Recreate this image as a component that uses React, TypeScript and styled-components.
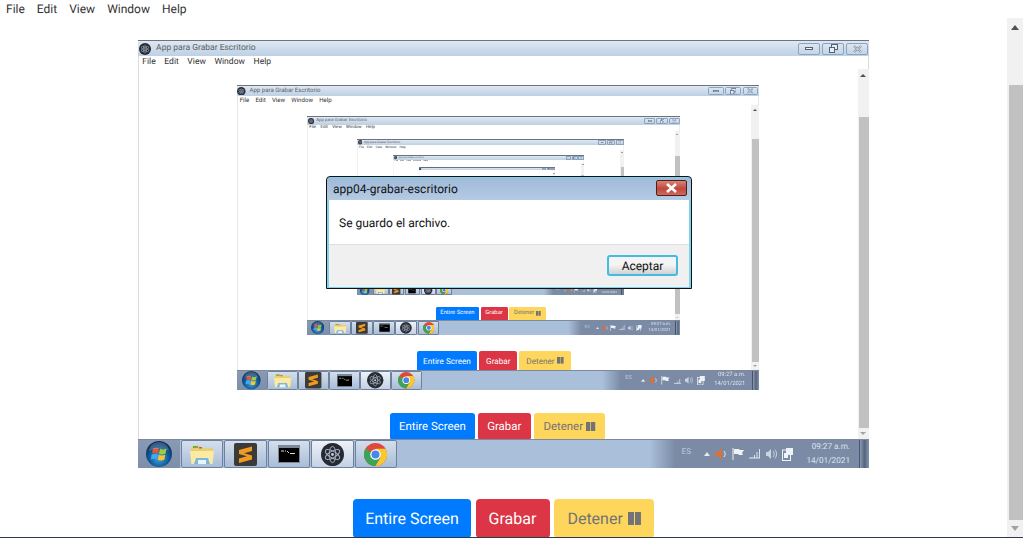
import React from "react";
import styled, { createGlobalStyle } from "styled-components";

const SHOT_RATIO = 731 / 1023;
const UI_FONT = `Roboto, "Open Sans", "Liberation Sans", sans-serif`;

const GlobalStyle = createGlobalStyle`
  html, body { margin: 0; padding: 0; background: #fff; overflow: hidden; }
  * { box-sizing: border-box; }
  body { font-family: ${UI_FONT}; text-rendering: geometricPrecision; }
`;

const Viewport = styled.div`
  position: relative;
  width: 1023px;
  height: 538px;
  font-size: 1px;
  overflow: hidden;
  background: #fff;
  border-bottom: 1px solid #2e3a4a;
`;

const PageBox = styled.div`
  width: 1023em;
  height: 537em;
  overflow: hidden;
`;

const MenuBar = styled.div`
  display: flex;
  height: 18em;
  padding-left: 6em;
  gap: 12em;
  align-items: center;
`;

const MenuItem = styled.span`
  font-size: 12em;
  line-height: 1;
  color: #333;
`;

const PageRow = styled.div`
  display: flex;
  height: 519em;
`;

const Main = styled.div`
  flex: 1;
  display: flex;
  flex-direction: column;
  align-items: center;
  min-width: 0;
`;

const Scrollbar = styled.div`
  width: 16em;
  background: #f1f1f1;
  display: flex;
  flex-direction: column;
  align-items: flex-end;
`;

const ArrowCell = styled.div<{ $down?: boolean }>`
  width: 16em;
  height: ${(p) => (p.$down ? "17em" : "18em")};
  margin-bottom: ${(p) => (p.$down ? "0" : "49em")};
  display: flex;
  align-items: center;
  justify-content: center;
`;

const Arrow = styled.div<{ $down?: boolean }>`
  width: 0;
  height: 0;
  border-left: 4.5em solid transparent;
  border-right: 4.5em solid transparent;
  ${(p) =>
    p.$down
      ? "border-top: 5em solid #a3a3a3;"
      : "border-bottom: 5em solid #505050;"}
`;

const Thumb = styled.div`
  width: 14em;
  height: 435em;
  background: #c1c1c1;
`;

const WindowFrame = styled.div`
  flex: none;
  margin-top: 22em;
  width: 731em;
  height: 428em;
  display: flex;
  flex-direction: column;
  filter: blur(0.35px);
`;

const TitleBar = styled.div`
  flex: none;
  height: 16em;
  display: flex;
  align-items: center;
  padding: 0 1em 0 1em;
  border-top: 1em solid #6b7480;
  background: linear-gradient(#dfe8f2, #bdd0e4);
`;

const TitleText = styled.span`
  flex: 1;
  margin-left: 0.6em;
  font-size: 8.5em;
  line-height: 1;
  color: #5a5f66;
`;

const WinButtons = styled.div`
  display: flex;
  gap: 2em;
`;

const WinButton = styled.div`
  width: 22em;
  height: 12em;
  border: 1em solid #8ba3bf;
  border-radius: 2em;
  background: linear-gradient(#dbe6f1, #c4d5e6);
  display: flex;
  align-items: center;
  justify-content: center;
`;

const Glyph = styled.svg<{ $w: number; $h: number }>`
  display: block;
  flex: none;
  width: ${(p) => p.$w}em;
  height: ${(p) => p.$h}em;
`;

const ShotArea = styled.div`
  flex: none;
  height: 536em;
  font-size: ${SHOT_RATIO}em;
  overflow: hidden;
`;

const ShotInner = styled.div`
  height: 536em;
  background: #fff;
  box-shadow: inset 1.4em 0 0 #dcdcdc, inset -1.4em 0 0 #dcdcdc;
`;

const Buttons = styled.div`
  flex: none;
  display: flex;
  gap: 4.5em;
  margin-top: 31em;
`;

const ActionButton = styled.div<{
  $kind: "primary" | "danger" | "warning";
  $width: number;
}>`
  font-size: 16em;
  width: ${(p) => p.$width / 16}em;
  line-height: 1.5;
  padding: 0.47em 0;
  border-radius: 0.25em;
  white-space: nowrap;
  display: flex;
  align-items: center;
  justify-content: center;
  gap: 0.3em;
  color: ${(p) => (p.$kind === "warning" ? "#727376" : "#fff")};
  background: ${(p) =>
    p.$kind === "primary"
      ? "#007bff"
      : p.$kind === "danger"
      ? "#dc3545"
      : "#ffd65c"};
`;

const Taskbar = styled.div`
  flex: none;
  height: 29em;
  display: flex;
  align-items: stretch;
  border-top: 1em solid #7d8a9e;
  background: linear-gradient(
    90deg,
    #aabfda 0,
    #aabfda 70%,
    #7b8ba6 73.5%,
    #7b8ba6 100%
  );
`;

const StartButton = styled.div`
  width: 42em;
  background: linear-gradient(#8a9ab5, #7d8ea9);
  display: flex;
  align-items: center;
  justify-content: center;
  margin-right: 1em;
`;

const TaskButton = styled.div<{ $light?: boolean }>`
  width: 42.4em;
  margin-right: 1em;
  border: 1em solid #6f809a;
  border-radius: 2em;
  background: ${(p) =>
    p.$light
      ? "linear-gradient(#eef2f8, #c3d1e4)"
      : "linear-gradient(#d4dfed, #a9bdd7)"};
  display: flex;
  align-items: center;
  justify-content: center;
`;

const Tray = styled.div`
  flex: 1;
  display: flex;
  align-items: center;
  justify-content: flex-end;
  gap: 5.5em;
`;

const TrayLang = styled.span`
  font-size: 8em;
  line-height: 1;
  color: #bcc8da;
  margin-right: 0.94em;
  margin-top: -0.5em;
`;

const Clock = styled.div`
  display: flex;
  flex-direction: column;
  align-items: flex-end;
  margin-left: 7.5em;
  margin-right: 3.5em;
  gap: 5em;
`;

const ClockLine = styled.span`
  font-size: 8.2em;
  line-height: 1;
  color: #dfe5ee;
`;

const ShowDesktop = styled.div`
  width: 10em;
  align-self: stretch;
  background: linear-gradient(90deg, #8c9ab0, #55657e 50%, #8594ab);
  border-left: 1em solid #46556c;
`;

/* the message box on top of everything */
const Dialog = styled.div`
  position: absolute;
  left: 326px;
  top: 176px;
  width: 366px;
  height: 113px;
  border: 1px solid #111;
  border-radius: 4px 4px 0 0;
  background: #7fd2ee;
  padding: 1px 2px 1px 2px;
  display: flex;
  flex-direction: column;
  font-family: ${UI_FONT};
`;

const DialogTitle = styled.div`
  flex: none;
  height: 22px;
  margin: 0 -2px;
  padding: 0 4px 0 6px;
  border-radius: 3px 3px 0 0;
  background: linear-gradient(#9fbad8, #b5cae3);
  display: flex;
  align-items: center;
  justify-content: space-between;
  font-size: 12px;
  color: #111;
`;

const CloseButton = styled.div`
  width: 31px;
  height: 16px;
  margin-top: -3px;
  border: 1px solid #4a2320;
  border-radius: 2px;
  background: linear-gradient(#d98377, #c2473b 55%, #cf6a5c);
  display: flex;
  align-items: center;
  justify-content: center;
  font-size: 1px;
`;

const DialogBody = styled.div`
  flex: 1;
  background: #fff;
  padding: 17px 10px 0;
  font-size: 12px;
  line-height: 1;
  color: #111;
  border-bottom: 1px solid #dfdfdf;
`;

const DialogFooter = styled.div`
  flex: none;
  height: 42px;
  background: #f0f0f0;
  display: flex;
  justify-content: flex-end;
  align-items: flex-start;
  padding: 10px 11px 0 0;
`;

const AcceptButton = styled.div`
  width: 71px;
  height: 21px;
  border: 2px solid #45bbe2;
  border-radius: 3px;
  background: linear-gradient(#f4f4f4 45%, #d2d2d2);
  display: flex;
  align-items: center;
  justify-content: center;
  font-size: 12px;
  color: #111;
`;

const ElectronIcon: React.FC<{ size: number }> = ({ size }) => (
  <Glyph $w={size} $h={size} viewBox="0 0 24 24">
    <circle cx="12" cy="12" r="12" fill="#252a33" />
    <g fill="none" stroke="#a9b4c2" strokeWidth="1">
      <ellipse cx="12" cy="12" rx="8.5" ry="3.4" transform="rotate(30 12 12)" />
      <ellipse cx="12" cy="12" rx="8.5" ry="3.4" transform="rotate(90 12 12)" />
      <ellipse cx="12" cy="12" rx="8.5" ry="3.4" transform="rotate(150 12 12)" />
    </g>
    <circle cx="12" cy="12" r="1.5" fill="#c5ced9" />
  </Glyph>
);

const PauseIcon = () => (
  <Glyph $w={0.81} $h={0.81} viewBox="0 0 13 13">
    <rect width="6" height="13" fill="#727376" />
    <rect x="7" width="6" height="13" fill="#727376" />
  </Glyph>
);

const Orb = () => (
  <Glyph $w={26} $h={26} viewBox="0 0 26 26">
    <defs>
      <radialGradient id="orbFill" cx="50%" cy="65%" r="60%">
        <stop offset="0" stopColor="#49a6dc" />
        <stop offset="0.6" stopColor="#125c9c" />
        <stop offset="1" stopColor="#0b2f56" />
      </radialGradient>
    </defs>
    <circle cx="13" cy="13" r="13" fill="url(#orbFill)" />
    <path d="M7 7.500c2-1 4-1 6 0l-1 5c-2-1-4-1-6 0z" fill="#e8562f" />
    <path d="M14 7.700c2 1 4 1 6.500 0l-1 5c-2.500 1-4.500 1-6.500 0z" fill="#9ccc3f" />
    <path d="M5.800 13.500c2-1 4-1 6 0l-1 5c-2-1-4-1-6 0z" fill="#3fa9f5" />
    <path d="M12.800 13.800c2 1 4 1 6.500 0l-1 5c-2.500 1-4.500 1-6.500 0z" fill="#f7c52e" />
    <path d="M3 10C4 3 9 1 13 1s9 2 10 9C17 7 9 7 3 10z" fill="#fff" opacity="0.18" />
  </Glyph>
);

const FolderIcon = () => (
  <Glyph $w={24} $h={21} viewBox="0 0 24 21">
    <path d="M1 3.500V19h22V4H11L9 1.500H3z" fill="#e7cf78" />
    <rect x="3" y="2" width="5" height="2" fill="#6cb04d" />
    <rect x="9" y="3" width="3" height="1.500" fill="#d9533c" />
    <path d="M0 7h24l-1.500 13h-21z" fill="#fbeaa4" />
    <path d="M6 14h12l2 6H4z" fill="#7db7dd" />
    <rect x="8" y="16" width="8" height="4" fill="#e9f4fb" />
  </Glyph>
);

const SublimeIcon = () => (
  <Glyph $w={23} $h={23} viewBox="0 0 23 23">
    <rect width="23" height="23" rx="2" fill="#3a3a38" />
    <path d="M5 7 18 3.500V8l-8 2.200 8 2.300V16.500L5 20v-4.500l8-2.200-8-2.300z" fill="#f29a1f" />
  </Glyph>
);

const CmdIcon = () => (
  <Glyph $w={22} $h={18} viewBox="0 0 22 18">
    <rect width="22" height="18" fill="#7c8796" />
    <rect x="1" y="3" width="20" height="14" fill="#000" />
    <path d="M3 6h3M7 6h1M9 6l2 2" stroke="#d8d8d8" strokeWidth="1" fill="none" />
    <rect x="12" y="8" width="5" height="1" fill="#d8d8d8" />
  </Glyph>
);

const ChromeIcon = () => (
  <Glyph $w={23} $h={23} viewBox="0 0 24 24">
    <circle cx="12" cy="12" r="12" fill="#e0483a" />
    <path d="M12 12 1.600 6A12 12 0 0 0 12 24l5.200-9z" fill="#3ba557" />
    <path d="M12 6h10.400A12 12 0 0 1 12 24l5.200-9z" fill="#f7c92f" />
    <circle cx="12" cy="12" r="5.500" fill="#fff" />
    <circle cx="12" cy="12" r="4.200" fill="#4a86e8" />
  </Glyph>
);

const TrayIcons = () => (
  <>
    <Glyph $w={6} $h={4} viewBox="0 0 6 4">
      <path d="M0 4 3 0l3 4z" fill="#e4e9f0" />
    </Glyph>
    <Glyph $w={11} $h={12} viewBox="0 0 11 12">
      <path d="M0 4h3l4-4v12L3 8H0z" fill="#d9713a" />
      <path d="M9 3c1.500 2 1.500 4 0 6" stroke="#e8ebf0" fill="none" />
    </Glyph>
    <Glyph $w={12} $h={12} viewBox="0 0 12 12">
      <path d="M1 0v12" stroke="#eef1f5" />
      <path d="M2 1h5l1 1h4l-2 3 1 2H7L6 6H2z" fill="#eef1f5" />
    </Glyph>
    <Glyph $w={11} $h={10} viewBox="0 0 11 10">
      <path d="M0 9h11M3 8v1M5.500 6v3M8 3v6M10.500 0v9" stroke="#e0e5ec" fill="none" />
    </Glyph>
    <Glyph $w={11} $h={12} viewBox="0 0 11 12">
      <path d="M0 4h2l3-3v10L2 8H0z" fill="#cdd4df" />
      <path d="M7 3c1.500 2 1.500 4 0 6M9 1.500c2 3 2 6 0 9" stroke="#cdd4df" fill="none" />
    </Glyph>
    <Glyph $w={11} $h={13} viewBox="0 0 11 13">
      <rect x="0.500" y="2" width="8" height="10.500" fill="#7b8ba6" stroke="#eef1f5" />
      <rect x="4" y="0" width="7" height="7" fill="#eef1f5" />
      <rect x="2" y="5" width="4" height="5" fill="#eef1f5" />
    </Glyph>
  </>
);

const WindowControls = () => (
  <WinButtons>
    <WinButton>
      <Glyph $w={8} $h={3} viewBox="0 0 8 3">
        <rect x="0.500" y="0.500" width="7" height="2" fill="#f2f5f9" stroke="#566274" />
      </Glyph>
    </WinButton>
    <WinButton>
      <Glyph $w={9} $h={9} viewBox="0 0 9 9">
        <rect x="2.500" y="0.500" width="6" height="5" fill="#e6edf5" stroke="#566274" />
        <rect x="0.500" y="3.500" width="5" height="5" fill="#e6edf5" stroke="#566274" />
      </Glyph>
    </WinButton>
    <WinButton>
      <Glyph $w={9} $h={8} viewBox="0 0 9 8">
        <path d="M1 1l7 6M8 1 1 7" stroke="#7d8897" strokeWidth="2.200" />
        <path d="M1 1l7 6M8 1 1 7" stroke="#eef2f7" strokeWidth="0.800" />
      </Glyph>
    </WinButton>
  </WinButtons>
);

const Shot: React.FC<{ depth: number }> = ({ depth }) => (
  <WindowFrame>
    <TitleBar>
      <ElectronIcon size={12} />
      <TitleText>App para Grabar Escritorio</TitleText>
      <WindowControls />
    </TitleBar>
    <ShotArea>
      <ShotInner>
        <Page depth={depth} />
      </ShotInner>
    </ShotArea>
    <Taskbar>
      <StartButton>
        <Orb />
      </StartButton>
      <TaskButton>
        <FolderIcon />
      </TaskButton>
      <TaskButton>
        <SublimeIcon />
      </TaskButton>
      <TaskButton>
        <CmdIcon />
      </TaskButton>
      <TaskButton $light>
        <ElectronIcon size={23} />
      </TaskButton>
      <TaskButton>
        <ChromeIcon />
      </TaskButton>
      <Tray>
        <TrayLang>ES</TrayLang>
        <TrayIcons />
        <Clock>
          <ClockLine>09:27 a.m.</ClockLine>
          <ClockLine>14/01/2021</ClockLine>
        </Clock>
        <ShowDesktop />
      </Tray>
    </Taskbar>
  </WindowFrame>
);

const Page: React.FC<{ depth: number }> = ({ depth }) => (
  <PageBox>
    <MenuBar>
      {["File", "Edit", "View", "Window", "Help"].map((label) => (
        <MenuItem key={label}>{label}</MenuItem>
      ))}
    </MenuBar>
    <PageRow>
      <Main>
        {depth > 0 && <Shot depth={depth - 1} />}
        <Buttons>
          <ActionButton $kind="primary" $width={118}>
            Entire Screen
          </ActionButton>
          <ActionButton $kind="danger" $width={74}>
            Grabar
          </ActionButton>
          <ActionButton $kind="warning" $width={100}>
            Detener
            <PauseIcon />
          </ActionButton>
        </Buttons>
      </Main>
      <Scrollbar>
        <ArrowCell>
          <Arrow />
        </ArrowCell>
        <Thumb />
        <ArrowCell $down>
          <Arrow $down />
        </ArrowCell>
      </Scrollbar>
    </PageRow>
  </PageBox>
);

const App: React.FC = () => (
  <Viewport>
    <GlobalStyle />
    <Page depth={6} />
    <Dialog>
      <DialogTitle>
        app04-grabar-escritorio
        <CloseButton>
          <Glyph $w={13} $h={10} viewBox="0 0 13 10">
            <path d="M2 1l9 8M11 1 2 9" stroke="#fff" strokeWidth="2.600" />
          </Glyph>
        </CloseButton>
      </DialogTitle>
      <DialogBody>Se guardo el archivo.</DialogBody>
      <DialogFooter>
        <AcceptButton>Aceptar</AcceptButton>
      </DialogFooter>
    </Dialog>
  </Viewport>
);

export default App;
